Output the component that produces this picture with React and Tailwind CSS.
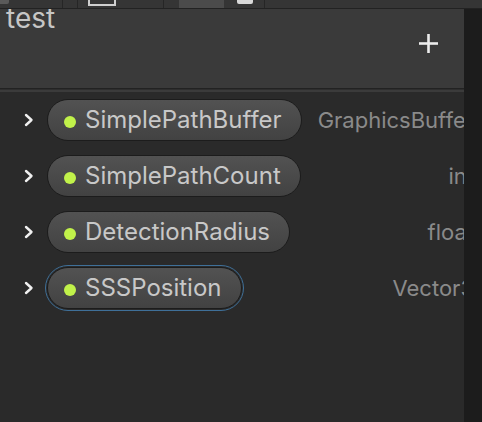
import React from 'react';

const props = [
  { name: 'SimplePathBuffer', type: 'GraphicsBuffer' },
  { name: 'SimplePathCount', type: 'int' },
  { name: 'DetectionRadius', type: 'float' },
  { name: 'SSSPosition', type: 'Vector3', selected: true },
];

const Chevron = () => (
  <svg width="10" height="14" viewBox="0 0 10 14" className="shrink-0">
    <polyline points="2,2 7.5,7 2,12" fill="none" stroke="#f0f0f0" strokeWidth="2.4" strokeLinecap="round" strokeLinejoin="round" />
  </svg>
);

const Row = ({ item }) => (
  <div className="h-[56px] flex items-center">
    <div className="w-[47px] pl-[24px] flex items-center">
      <Chevron />
    </div>
    <div
      className={
        item.selected
          ? 'rounded-full outline outline-[1.5px] outline-[#3f7099] outline-offset-[1px]'
          : 'rounded-full'
      }
    >
      <div className="h-[42px] flex items-center rounded-full border border-[#1c1c1c] bg-gradient-to-b from-[#525252] to-[#424242] pl-[16px] pr-[19px]">
        <span className="w-[12px] h-[12px] rounded-full bg-[#c1f24a] mt-[3px] shrink-0" />
        <span className="ml-[9px] text-[24px] leading-none text-[#c8c8c8] whitespace-nowrap">{item.name}</span>
      </div>
    </div>
    <span className="ml-auto mr-[-10px] text-[22px] leading-none text-[#8a8a8a] whitespace-nowrap">{item.type}</span>
  </div>
);

export default function App() {
  return (
    <div className="w-[482px] h-[422px] bg-[#2a2a2a] flex flex-col overflow-hidden font-['Inter',sans-serif]">
      {/* toolbar strip */}
      <div className="h-[9px] bg-[#353535] border-b border-[#222] flex shrink-0">
        <div className="w-[9px] h-[4px] bg-[#5a5a5a] rounded-br-[2px]" />
        <div className="w-[53px]" />
        <div className="w-[1px] bg-[#262626]" />
        <div className="w-[14px]" />
        <div className="w-[1px] bg-[#262626]" />
        <div className="w-[10px]" />
        <div className="w-[28px] h-[6px] border-x-2 border-b-2 border-[#cfcfcf]" />
        <div className="w-[47px]" />
        <div className="w-[1px] bg-[#262626]" />
        <div className="w-[15px]" />
        <div className="w-[45px] bg-[#4b4b4b]" />
        <div className="w-[13px]" />
        <div className="w-[16px] h-[4px] bg-[#d8d8d8] rounded-b-[2px]" />
        <div className="w-[11px]" />
        <div className="w-[1px] bg-[#262626]" />
      </div>
      <div className="flex flex-1 min-h-0">
        <div className="w-[464px] flex flex-col overflow-hidden">
          {/* header */}
          <div className="h-[80px] bg-[#3a3a3a] border-b border-[#222] flex items-start justify-between shrink-0">
            <span className="ml-[6px] mt-[-1px] text-[28px] leading-[20px] text-[#c6c6c6]">test</span>
            <svg width="19" height="19" viewBox="0 0 19 19" className="mt-[25px] mr-[26px]">
              <rect x="8.2" y="0" width="2.6" height="19" fill="#ececec" />
              <rect x="0" y="8.2" width="19" height="2.6" fill="#ececec" />
            </svg>
          </div>
          <div className="h-[1px] bg-[#2e2e2e] shrink-0" />
          <div className="h-[2px] bg-[#3b3b3b] shrink-0" />
          {/* list */}
          <div className="flex flex-col">
            {props.map((p) => (
              <Row key={p.name} item={p} />
            ))}
          </div>
        </div>
        <div className="flex-1 bg-[#1c1c1c]" />
      </div>
    </div>
  );
}
